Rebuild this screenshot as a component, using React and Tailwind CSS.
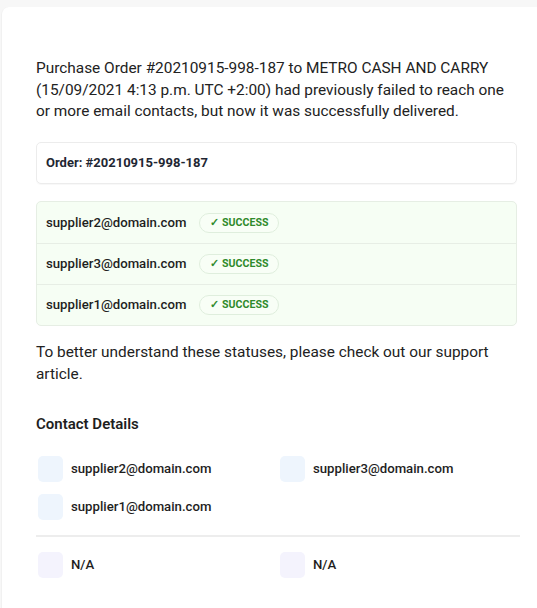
import React from 'react';

const deliveries = [
    { email: 'supplier2@domain.com', status: 'SUCCESS' },
    { email: 'supplier3@domain.com', status: 'SUCCESS' },
    { email: 'supplier1@domain.com', status: 'SUCCESS' },
];

const ContactItem = ({ label, tone }) => (
    <div className="flex items-center h-[26px]">
        <div className={`ml-[2px] w-[25px] h-[26px] rounded-[5px] ${tone === 'blue' ? 'bg-[#eef5fd]' : 'bg-[#f4f3fd]'}`} />
        <span className="ml-[8px] text-[13.2px] font-medium text-[#1e1e1e]">{label}</span>
    </div>
);

export default function App() {
    return (
        <div className="min-h-[608px] bg-[#f7f7f7] pt-[7px] pl-[1px] font-['Roboto',sans-serif] overflow-hidden">
            <div className="bg-white rounded-tl-lg border-l border-[#f1f1f1] min-h-[601px] pl-[34px] pr-[20px] pt-[51px]">
                {/* Intro */}
                <p className="text-[15.4px] leading-[21.7px] text-[#222]">
                    Purchase Order #20210915-998-187 to METRO CASH AND CARRY (15/09/2021 4:13 p.m. UTC +2:00) had previously failed to reach one or more email contacts, but now it was successfully delivered.
                </p>

                {/* Order box */}
                <div className="mt-[19px] h-[42px] flex items-center px-[9px] border border-[#ececec] rounded-[5px] shadow-[0_1px_1px_rgba(0,0,0,0.03)]">
                    <span className="text-[13px] font-bold text-[#1f2733]">Order: #20210915-998-187</span>
                </div>

                {/* Delivery statuses */}
                <div className="mt-[17px] border border-[#e6eee4] rounded-[5px] bg-[#f6fef4] overflow-hidden">
                    {deliveries.map((d, i) => (
                        <div
                            key={d.email}
                            className={`h-[41px] flex items-center px-[9px] ${i > 0 ? 'border-t border-[#e7eee5]' : ''}`}
                        >
                            <span className="text-[13.2px] font-medium text-[#1e1e1e]">{d.email}</span>
                            <span className="ml-[13px] h-[20px] px-[10px] flex items-center rounded-full border border-[#dfeedd] bg-[#f8fef6] text-[10.6px] font-bold text-[#2f8a2b]">
                                ✓ {d.status}
                            </span>
                        </div>
                    ))}
                </div>

                <p className="mt-[16px] text-[15.4px] leading-[21.7px] text-[#222]">
                    To better understand these statuses, please check out our support article.
                </p>

                {/* Contacts */}
                <h3 className="mt-[28px] text-[15px] leading-[20px] font-semibold text-[#1e1e1e]">Contact Details</h3>

                <div className="mt-[22px] grid grid-cols-[242px_1fr] gap-y-[12px]">
                    <ContactItem label="supplier2@domain.com" tone="blue" />
                    <ContactItem label="supplier3@domain.com" tone="blue" />
                    <ContactItem label="supplier1@domain.com" tone="blue" />
                </div>

                <div className="mt-[15px] mr-[-3px] h-[2px] bg-[#ededed]" />

                <div className="mt-[15px] grid grid-cols-[242px_1fr]">
                    <ContactItem label="N/A" tone="purple" />
                    <ContactItem label="N/A" tone="purple" />
                </div>
            </div>
        </div>
    );
}
